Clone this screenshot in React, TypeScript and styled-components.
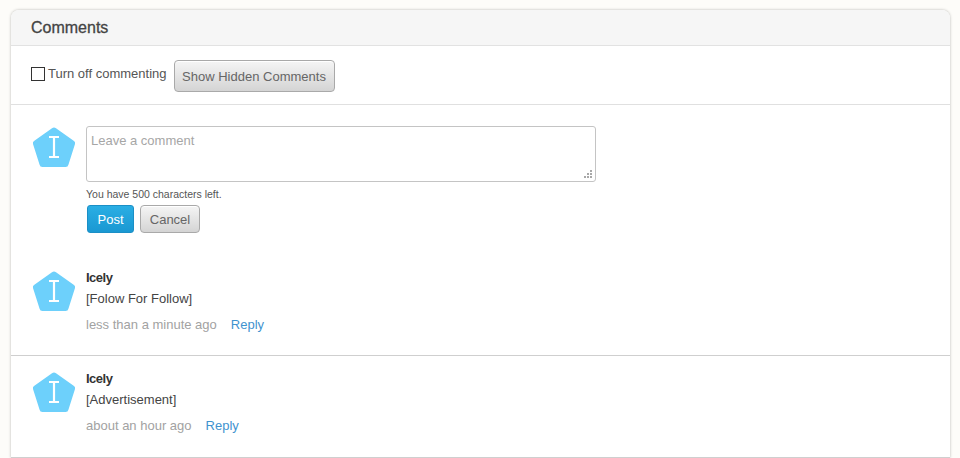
import { type FC } from "react";
import styled, { createGlobalStyle } from "styled-components";

const GlobalStyle = createGlobalStyle`
  html, body {
    margin: 0;
    padding: 0;
    height: 458px;
    overflow: hidden;
    background: #fdfcf9;
    font-family: "Liberation Sans", Arial, sans-serif;
  }
`;

const Page = styled.div`
  padding: 10px 10px 0 11px;
`;

const Card = styled.section`
  background: #fff;
  border-radius: 8px 8px 0 0;
  box-shadow: 0 0 3px rgba(0, 0, 0, 0.28);
  height: 448px;
  overflow: hidden;
`;

const CardHeader = styled.header`
  height: 36px;
  box-sizing: border-box;
  padding: 9px 20px 0;
  background: #f6f6f6;
  border-bottom: 1px solid #e2e2e2;
`;

const Title = styled.h2`
  margin: 0;
  font-size: 16px;
  line-height: 18px;
  font-weight: 400;
  color: #444;
  -webkit-text-stroke: 0.3px #444;
`;

const Toolbar = styled.div`
  height: 59px;
  box-sizing: border-box;
  padding: 14px 20px 0;
  display: flex;
  align-items: flex-start;
  border-bottom: 1px solid #e0e0e0;
`;

const ToggleLabel = styled.label`
  display: flex;
  align-items: center;
  margin-top: 6px;
  font-size: 13px;
  color: #555;
`;

const CheckBox = styled.span`
  width: 12px;
  height: 12px;
  border: 1px solid #333;
  margin-right: 3px;
  background: #fff;
`;

const GreyButton = styled.button<{ $wide?: boolean }>`
  box-sizing: border-box;
  height: ${({ $wide }) => ($wide ? "32px" : "28px")};
  width: ${({ $wide }) => ($wide ? "161px" : "60px")};
  margin-left: ${({ $wide }) => ($wide ? "7px" : "6px")};
  padding: 0;
  font-family: inherit;
  font-size: 13px;
  color: #666;
  border: 1px solid #a9a9a9;
  border-radius: 4px;
  background: linear-gradient(#f5f5f5, #d4d4d4);
  box-shadow: inset 0 1px 0 #fff;
`;

const Composer = styled.div`
  display: flex;
  padding: 21px 0 0 21px;
  height: 128px;
  box-sizing: border-box;
`;

const AvatarShape = styled.svg`
  width: 44px;
  height: 44px;
  flex: none;
  margin-right: 10px;
`;

const FormColumn = styled.div`
  display: flex;
  flex-direction: column;
`;

const CommentBox = styled.div`
  position: relative;
  width: 510px;
  height: 59px;
  box-sizing: border-box;
  border: 1px solid #c4c4c4;
  border-radius: 3px;
  padding: 6px 4px;
  font-size: 13px;
  line-height: 15px;
  color: #a6a6a6;
`;

const ResizeGrip = styled.svg`
  position: absolute;
  right: 2px;
  bottom: 2px;
  width: 9px;
  height: 9px;
`;

const Counter = styled.div`
  margin-top: 6px;
  font-size: 10.5px;
  line-height: 13px;
  color: #555;
`;

const ButtonRow = styled.div`
  display: flex;
  margin: 4px 0 0 1px;
`;

const PostButton = styled.button`
  box-sizing: border-box;
  width: 47px;
  height: 28px;
  padding: 0;
  font-family: inherit;
  font-size: 13px;
  color: #fff;
  border: 1px solid #1b8fc6;
  border-radius: 3px;
  background: linear-gradient(#2aaee4, #1a98d2);
`;

const CommentRow = styled.article<{ $height: number; $top: number; $divided?: boolean }>`
  display: flex;
  box-sizing: border-box;
  height: ${({ $height }) => $height}px;
  padding: ${({ $top }) => $top}px 0 0 21px;
  border-bottom: ${({ $divided }) => ($divided ? "1px solid #cfcfcf" : "0")};
`;

const Author = styled.div`
  font-size: 13px;
  line-height: 15px;
  font-weight: 700;
  letter-spacing: -0.5px;
  color: #333;
`;

const Body = styled.div`
  margin-top: 6px;
  font-size: 13px;
  line-height: 15px;
  color: #444;
`;

const Meta = styled.div`
  display: flex;
  gap: 14px;
  margin-top: 11px;
  font-size: 13px;
  line-height: 15px;
  color: #a2a2a2;
`;

const ReplyLink = styled.a`
  color: #3f93cf;
`;

const Avatar: FC = () => (
  <AvatarShape viewBox="0 0 44 44">
    <path
      d="M22 1.5 Q23 1.5 24 2.3 L42 15 Q43.5 16 43 18 L36.5 38.5 Q36 41 33.5 41 L10.5 41 Q8 41 7.500 38.5 L1 18 Q0.500 16 2 15 L20 2.300 Q21 1.500 22 1.500 Z"
      fill="#6dd0fb"
    />
    <path d="M17 11h10M17 31h10M22 11v20" stroke="#fff" strokeWidth="2.200" fill="none" />
  </AvatarShape>
);

type CommentProps = {
  body: string;
  time: string;
  height: number;
  top: number;
  divided?: boolean;
};

const Comment: FC<CommentProps> = ({ body, time, height, top, divided }) => (
  <CommentRow $height={height} $top={top} $divided={divided}>
    <Avatar />
    <div>
      <Author>Icely</Author>
      <Body>{body}</Body>
      <Meta>
        <span>{time}</span>
        <ReplyLink>Reply</ReplyLink>
      </Meta>
    </div>
  </CommentRow>
);

const App: FC = () => (
  <Page>
    <GlobalStyle />
    <Card>
      <CardHeader>
        <Title>Comments</Title>
      </CardHeader>
      <Toolbar>
        <ToggleLabel>
          <CheckBox />
          Turn off commenting
        </ToggleLabel>
        <GreyButton $wide>Show Hidden Comments</GreyButton>
      </Toolbar>
      <Composer>
        <Avatar />
        <FormColumn>
          <CommentBox>
            Leave a comment
            <ResizeGrip viewBox="0 0 9 9">
              <path
                d="M6 0h2v2H6zM3 3h2v2H3zM6 3h2v2H6zM0 6h2v2H0zM3 6h2v2H3zM6 6h2v2H6z"
                fill="#a8a8a8"
              />
            </ResizeGrip>
          </CommentBox>
          <Counter>You have 500 characters left.</Counter>
          <ButtonRow>
            <PostButton>Post</PostButton>
            <GreyButton>Cancel</GreyButton>
          </ButtonRow>
        </FormColumn>
      </Composer>
      <Comment body="[Folow For Follow]" time="less than a minute ago" height={123} top={37} divided />
      <Comment body="[Advertisement]" time="about an hour ago" height={102} top={15} divided />
    </Card>
  </Page>
);

export default App;
